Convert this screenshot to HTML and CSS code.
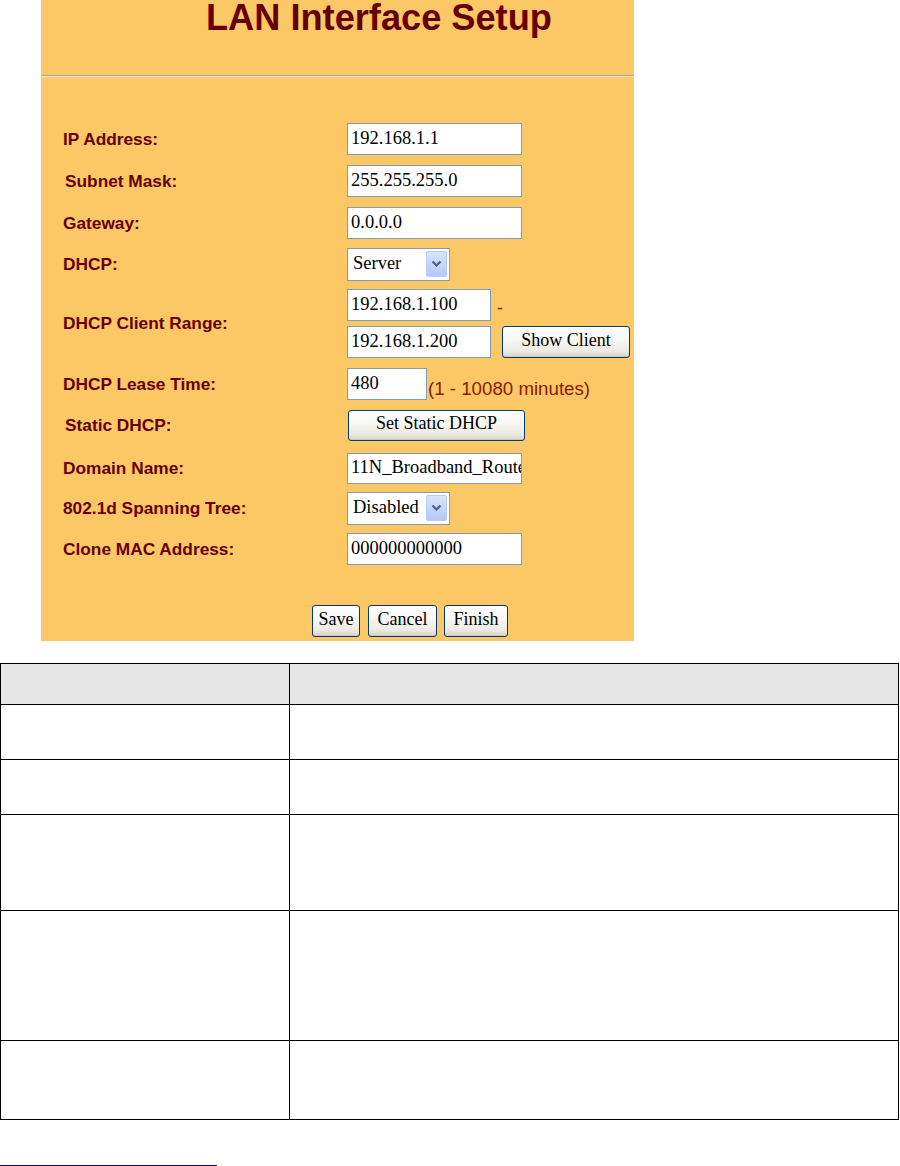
FILE: index.html
```html
<!DOCTYPE html>
<html lang="en">
<head>
<meta charset="utf-8">
<title>LAN Interface Setup</title>
<link rel="stylesheet" href="styles.css">
</head>
<body>
<div class="panel">
  <h1 class="title">LAN Interface Setup</h1>
  <div class="rule"></div>
  <div class="form">
    <div class="row first">
      <div class="label">IP Address:</div>
      <div class="ctrl"><input class="field wide" type="text" value="192.168.1.1"></div>
    </div>
    <div class="row">
      <div class="label indent">Subnet Mask:</div>
      <div class="ctrl"><input class="field wide" type="text" value="255.255.255.0"></div>
    </div>
    <div class="row">
      <div class="label">Gateway:</div>
      <div class="ctrl"><input class="field wide" type="text" value="0.0.0.0"></div>
    </div>
    <div class="row mt9">
      <div class="label">DHCP:</div>
      <div class="ctrl">
        <div class="select"><span class="sel-text">Server</span><span class="arrow"><svg width="11" height="8" viewBox="0 0 11 8"><path d="M1.5 1.5 L5.5 5.5 L9.5 1.5" fill="none" stroke="#4a5f8a" stroke-width="2.2"/></svg></span></div>
      </div>
    </div>
    <div class="row mt8">
      <div class="label">DHCP Client Range:</div>
      <div class="ctrl range">
        <div class="range-line"><input class="field mid" type="text" value="192.168.1.100"><span class="dash">-</span></div>
        <div class="range-line"><input class="field mid" type="text" value="192.168.1.200"><button class="btn show" type="button">Show Client</button></div>
      </div>
    </div>
    <div class="row">
      <div class="label">DHCP Lease Time:</div>
      <div class="ctrl lease"><input class="field short" type="text" value="480"><span class="hint">(1 - 10080 minutes)</span></div>
    </div>
    <div class="row">
      <div class="label indent">Static DHCP:</div>
      <div class="ctrl"><button class="btn static" type="button">Set Static DHCP</button></div>
    </div>
    <div class="row mt12">
      <div class="label">Domain Name:</div>
      <div class="ctrl"><input class="field wide thin" type="text" value="11N_Broadband_Router"></div>
    </div>
    <div class="row mt8">
      <div class="label">802.1d Spanning Tree:</div>
      <div class="ctrl">
        <div class="select"><span class="sel-text">Disabled</span><span class="arrow"><svg width="11" height="8" viewBox="0 0 11 8"><path d="M1.5 1.5 L5.5 5.5 L9.5 1.5" fill="none" stroke="#4a5f8a" stroke-width="2.2"/></svg></span></div>
      </div>
    </div>
    <div class="row mt8">
      <div class="label">Clone MAC Address:</div>
      <div class="ctrl"><input class="field wide" type="text" value="000000000000"></div>
    </div>
  </div>
  <div class="actions">
    <button class="btn save" type="button">Save</button>
    <button class="btn cancel" type="button">Cancel</button>
    <button class="btn finish" type="button">Finish</button>
  </div>
</div>

<table class="grid">
  <tr class="head"><td class="c1"></td><td></td></tr>
  <tr class="r55"><td class="c1"></td><td></td></tr>
  <tr class="r55"><td class="c1"></td><td></td></tr>
  <tr class="r96"><td class="c1"></td><td></td></tr>
  <tr class="r130"><td class="c1"></td><td></td></tr>
  <tr class="r79"><td class="c1"></td><td></td></tr>
</table>

<div class="footnote-rule"></div>
</body>
</html>
```

FILE: styles.css
```css
html, body {
  margin: 0;
  padding: 0;
  background: #ffffff;
}

body {
  font-family: "Liberation Sans", Arial, sans-serif;
  width: 900px;
  overflow: hidden;
}

.panel {
  width: 593px;
  height: 641px;
  margin-left: 41px;
  background: #fcc866;
  overflow: hidden;
}

.title {
  margin: 0;
  padding-left: 165px;
  font-family: "Liberation Sans", Arial, sans-serif;
  font-weight: bold;
  font-size: 36.2px;
  line-height: 35px;
  color: #660000;
}

.rule {
  margin-top: 40px;
  height: 0;
  border-top: 1px solid #a9a49a;
  border-bottom: 1px solid #f3e6cc;
}

.form {
  display: flex;
  flex-direction: column;
}

.row {
  display: flex;
  align-items: center;
  margin-top: 10px;
}

.row.first { margin-top: 46px; }
.row.mt8 { margin-top: 8px; }
.row.mt9 { margin-top: 9px; }
.row.mt12 { margin-top: 12px; }

.label {
  width: 284px;
  padding-left: 22px;
  flex: none;
  font-weight: bold;
  font-size: 17.3px;
  color: #660000;
}

.label.indent {
  padding-left: 24px;
  width: 282px;
}

.ctrl {
  display: flex;
  align-items: center;
}

.field {
  box-sizing: border-box;
  height: 32px;
  border: 1px solid #7f9db9;
  background: #ffffff;
  padding: 0 0 2px 3px;
  margin: 0;
  font-family: "Liberation Serif", "Times New Roman", serif;
  font-size: 18.5px;
  color: #000000;
  outline: none;
}

.field.wide { width: 175px; }
.field.mid { width: 144px; }
.field.short { width: 80px; }
.field.thin { height: 31px; }

.select {
  box-sizing: border-box;
  width: 103px;
  height: 33px;
  border: 1px solid #7f9db9;
  background: #ffffff;
  display: flex;
  align-items: center;
  justify-content: space-between;
  padding-left: 5px;
  padding-right: 2px;
}

.sel-text {
  font-family: "Liberation Serif", "Times New Roman", serif;
  font-size: 18.5px;
  color: #000000;
  padding-bottom: 2px;
}

.arrow {
  box-sizing: border-box;
  width: 21px;
  height: 26px;
  border: 1px solid #b9cbf3;
  border-radius: 2px;
  background: linear-gradient(180deg, #d9e4fd 0%, #c5d6fb 50%, #b4c8f6 100%);
  display: flex;
  align-items: center;
  justify-content: center;
  margin-bottom: 1px;
}

.range {
  flex-direction: column;
  align-items: flex-start;
}

.range-line {
  display: flex;
  align-items: center;
}

.range-line + .range-line { margin-top: 5px; }

.dash {
  align-self: flex-end;
  margin-left: 6px;
  margin-bottom: 3px;
  font-size: 18px;
  line-height: 20px;
  color: #8b1a00;
}

.lease {
  align-items: flex-end;
}

.hint {
  margin-left: 1px;
  font-size: 18.7px;
  line-height: 22px;
  color: #8b1a00;
}

.btn {
  box-sizing: border-box;
  height: 32px;
  margin: 0;
  padding: 0 0 4px 0;
  border: 1px solid #003c74;
  border-radius: 3px;
  background: linear-gradient(180deg, #ffffff 0%, #f6f6f2 45%, #eceae2 80%, #d8d3c8 100%);
  font-family: "Liberation Serif", "Times New Roman", serif;
  font-size: 18px;
  color: #000000;
  box-shadow: inset 0 -1px 0 #cfc9bc;
}

.btn.show { width: 128px; margin-left: 11px; }
.btn.static { width: 177px; height: 31px; margin-left: 1px; }

.actions {
  display: flex;
  gap: 8px;
  margin-top: 40px;
  padding-left: 271px;
}

.btn.save { width: 48px; }
.btn.cancel { width: 69px; }
.btn.finish { width: 64px; margin-left: -1px; }

.grid {
  margin-top: 22px;
  width: 899px;
  border-collapse: collapse;
  table-layout: fixed;
}

.grid td {
  border: 1px solid #000000;
  padding: 0;
}

.grid td.c1 { width: 288px; }

.grid tr.head td { background: #e6e6e6; }
.grid tr.head { height: 41px; }
.grid tr.r55 { height: 55px; }
.grid tr.r96 { height: 96px; }
.grid tr.r130 { height: 130px; }
.grid tr.r79 { height: 79px; }

.footnote-rule {
  margin-top: 45px;
  width: 217px;
  height: 1px;
  background: #0c0c6e;
}
```
